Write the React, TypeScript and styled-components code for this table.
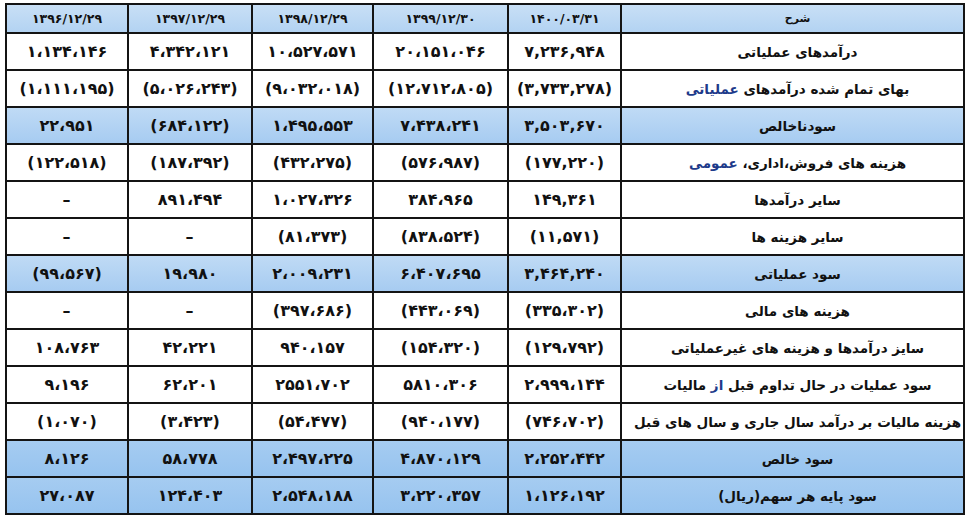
import React from "react";
import styled, { createGlobalStyle, css } from "styled-components";

const GlobalStyle = createGlobalStyle`
  html, body {
    margin: 0;
    padding: 0;
    background: #ffffff;
  }
  body {
    font-family: "DejaVu Sans", "Noto Sans", sans-serif;
    color: #111;
  }
`;

type Tone = "plain" | "light" | "deep" | "head";

const Page = styled.div`
  width: 968px;
  height: 521px;
  padding: 3px 0 0 5px;
  box-sizing: border-box;
  background: #fff;
`;

const Table = styled.table`
  direction: rtl;
  border-collapse: collapse;
  table-layout: fixed;
  width: 958px;
  border: 2px solid #141414;
`;

const toneBg = (tone: Tone) => {
  switch (tone) {
    case "head":
      return css`background: linear-gradient(180deg, #c9e0f6 0%, #b2d2f2 100%);`;
    case "light":
      return css`background: linear-gradient(180deg, #c0dbf5 0%, #a6cbf1 100%);`;
    case "deep":
      return css`background: linear-gradient(180deg, #a6ccf1 0%, #96c3ef 100%);`;
    default:
      return css`background: #ffffff;`;
  }
};

const Row = styled.tr<{ $tone: Tone; $h: number }>`
  height: ${(p) => p.$h}px;
  ${(p) => toneBg(p.$tone)}
`;

const Cell = styled.td`
  border: 2px solid #141414;
  padding: 0 2px;
  text-align: center;
  vertical-align: middle;
  font-weight: bold;
  white-space: nowrap;
  overflow: hidden;
`;

const LabelCell = styled(Cell)<{ $head?: boolean }>`
  font-size: ${(p) => (p.$head ? "11px" : "13.5px")};
  padding: 0 2px 0 12px;
`;

const NumCell = styled(Cell)<{ $head?: boolean }>`
  direction: ltr;
  font-size: ${(p) => (p.$head ? "12.5px" : "16px")};
  letter-spacing: ${(p) => (p.$head ? "0.3px" : "0.8px")};
`;

const Tint = styled.span`
  color: #1d3a8a;
`;

type RowData = {
  label: React.ReactNode;
  vals: string[]; // order: 1400, 1399, 1398, 1397, 1396
  tone: Tone;
};

const header = ["۱۴۰۰/۰۳/۳۱", "۱۳۹۹/۱۲/۳۰", "۱۳۹۸/۱۲/۲۹", "۱۳۹۷/۱۲/۲۹", "۱۳۹۶/۱۲/۲۹"];

const rows: RowData[] = [
  {
    label: "درآمدهای عملیاتی",
    vals: ["۷,۲۳۶,۹۴۸", "۲۰،۱۵۱،۰۴۶", "۱۰،۵۲۷،۵۷۱", "۴،۳۴۲،۱۲۱", "۱،۱۳۴،۱۴۶"],
    tone: "plain",
  },
  {
    label: (
      <>
        بهای تمام شده درآمدهای <Tint>عملیاتی</Tint>
      </>
    ),
    vals: ["(۳,۷۳۳,۲۷۸)", "(۱۲،۷۱۲،۸۰۵)", "(۹،۰۳۲،۰۱۸)", "(۵،۰۲۶،۲۴۳)", "(۱،۱۱۱،۱۹۵)"],
    tone: "plain",
  },
  {
    label: "سودناخالص",
    vals: ["۳,۵۰۳,۶۷۰", "۷،۴۳۸،۲۴۱", "۱،۴۹۵،۵۵۳", "(۶۸۴،۱۲۲)", "۲۲،۹۵۱"],
    tone: "light",
  },
  {
    label: (
      <>
        هزینه های فروش،اداری، <Tint>عمومی</Tint>
      </>
    ),
    vals: ["(۱۷۷,۲۲۰)", "(۵۷۶،۹۸۷)", "(۴۳۲،۲۷۵)", "(۱۸۷،۳۹۲)", "(۱۲۲،۵۱۸)"],
    tone: "plain",
  },
  {
    label: "سایر درآمدها",
    vals: ["۱۴۹,۳۶۱", "۳۸۴،۹۶۵", "۱،۰۲۷،۳۲۶", "۸۹۱،۴۹۴", "–"],
    tone: "plain",
  },
  {
    label: "سایر هزینه ها",
    vals: ["(۱۱,۵۷۱)", "(۸۳۸،۵۲۴)", "(۸۱،۳۷۳)", "–", "–"],
    tone: "plain",
  },
  {
    label: "سود عملیاتی",
    vals: ["۳,۴۶۴,۲۴۰", "۶،۴۰۷،۶۹۵", "۲،۰۰۹،۲۳۱", "۱۹،۹۸۰", "(۹۹،۵۶۷)"],
    tone: "light",
  },
  {
    label: "هزینه های مالی",
    vals: ["(۳۳۵،۳۰۲)", "(۴۴۳،۰۶۹)", "(۳۹۷،۶۸۶)", "–", "–"],
    tone: "plain",
  },
  {
    label: "سایز درآمدها و هزینه های غیرعملیاتی",
    vals: ["(۱۲۹،۷۹۲)", "(۱۵۴،۳۲۰)", "۹۴۰،۱۵۷", "۴۲،۲۲۱", "۱۰۸،۷۶۳"],
    tone: "plain",
  },
  {
    label: (
      <>
        سود عملیات در حال تداوم قبل <Tint>از</Tint> مالیات
      </>
    ),
    vals: ["۲،۹۹۹،۱۴۴", "۵۸۱۰،۳۰۶", "۲۵۵۱،۷۰۲", "۶۲،۲۰۱", "۹،۱۹۶"],
    tone: "plain",
  },
  {
    label: "هزینه مالیات بر درآمد سال جاری و سال های قبل",
    vals: ["(۷۴۶،۷۰۲)", "(۹۴۰،۱۷۷)", "(۵۴،۴۷۷)", "(۳،۴۲۳)", "(۱،۰۷۰)"],
    tone: "plain",
  },
  {
    label: "سود خالص",
    vals: ["۲،۲۵۲،۴۴۲", "۴،۸۷۰،۱۲۹", "۲،۴۹۷،۲۲۵", "۵۸،۷۷۸", "۸،۱۲۶"],
    tone: "deep",
  },
  {
    label: "سود پایه هر سهم(ریال)",
    vals: ["۱،۱۲۶،۱۹۲", "۳،۲۲۰،۳۵۷", "۲،۵۴۸،۱۸۸", "۱۲۴،۴۰۳", "۲۷،۰۸۷"],
    tone: "deep",
  },
];

const widths = [343, 113, 135, 121, 124, 122];

export default function App() {
  return (
    <>
      <GlobalStyle />
      <Page>
        <Table>
          <colgroup>
            {widths.map((w, i) => (
              <col key={i} style={{ width: w }} />
            ))}
          </colgroup>
          <tbody>
            <Row $tone="head" $h={29}>
              <LabelCell $head>شرح</LabelCell>
              {header.map((h, i) => (
                <NumCell key={i} $head>
                  {h}
                </NumCell>
              ))}
            </Row>
            {rows.map((r, i) => (
              <Row key={i} $tone={r.tone} $h={37}>
                <LabelCell>{r.label}</LabelCell>
                {r.vals.map((v, j) => (
                  <NumCell key={j}>{v}</NumCell>
                ))}
              </Row>
            ))}
          </tbody>
        </Table>
      </Page>
    </>
  );
}
